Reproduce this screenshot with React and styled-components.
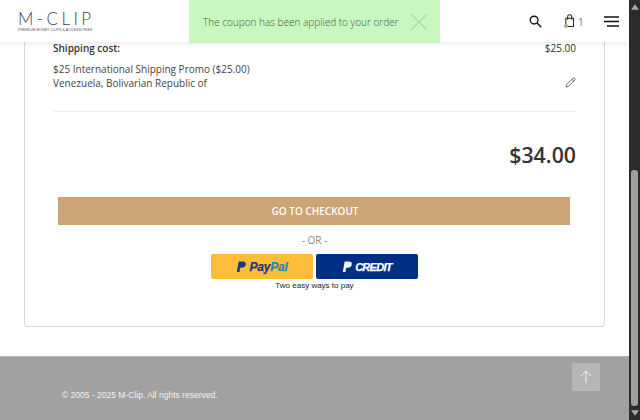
import styled, { createGlobalStyle } from 'styled-components';
import { Pencil } from 'lucide-react';

const GlobalStyle = createGlobalStyle`
    html, body {
        margin:0;
        padding:0;
        height:420px;
        overflow:hidden;
        background:#fff;
    }
    * {
        box-sizing:border-box;
    }
`

const Page = styled.div`
    display:flex;
    width:640px;
    height:420px;
    font-family:"Open Sans", sans-serif;
    color:#333;
`

const Main = styled.div`
    flex:1;
    display:flex;
    flex-direction:column;
    min-width:0;
`

const Header = styled.header`
    position:relative;
    z-index:2;
    flex:none;
    height:42px;
    display:flex;
    align-items:center;
    justify-content:space-between;
    padding:0 10px 0 18px;
    background:#fff;
    box-shadow:0 1px 6px rgba(0,0,0,.1);
`

const Logo = styled.div`
    display:flex;
    flex-direction:column;
    margin-top:1px;
`

const LogoName = styled.span`
    font-family:Lato, sans-serif;
    font-weight:300;
    font-size:17px;
    line-height:18px;
    letter-spacing:3.4px;
    color:#444;
`

const LogoTag = styled.span`
    font-family:"Liberation Sans", sans-serif;
    font-size:3.6px;
    line-height:5px;
    letter-spacing:.05px;
    color:#555;
    white-space:nowrap;
`

const Toast = styled.div`
    position:absolute;
    left:189px;
    top:0;
    width:251px;
    height:43px;
    display:flex;
    align-items:center;
    justify-content:space-between;
    padding:0 12px 0 14px;
    background:#c9f7c0;
    color:#465545;
    font-family:"Open Sans", sans-serif;
    font-weight:300;
    font-size:10px;
    white-space:nowrap;
`

const Tools = styled.div`
    display:flex;
    align-items:center;
`

const CartCount = styled.span`
    font-size:11px;
    color:#888;
    margin-left:3px;
    margin-right:20px;
`

const CartMark = styled.span`
    position:relative;
    display:flex;
`

const CartDot = styled.span`
    position:absolute;
    left:0;
    bottom:0;
    width:4px;
    height:4px;
    border-radius:50%;
    background:#c9a472;
`

const Content = styled.main`
    flex:1;
    display:flex;
    flex-direction:column;
    min-height:0;
`

const Card = styled.section`
    flex:none;
    margin:0 24px;
    height:285px;
    padding:0 28px;
    border:1px solid #d9d9d9;
    border-top:0;
    border-radius:0 0 4px 4px;
    display:flex;
    flex-direction:column;
    font-size:10px;
`

const CostRow = styled.div`
    display:flex;
    justify-content:space-between;
    align-items:center;
    height:17px;
    margin-top:-3px;
`

const CostLabel = styled.span`
    font-weight:600;
`

const ShippingInfo = styled.div`
    display:flex;
    justify-content:space-between;
    align-items:flex-end;
    margin-top:6px;
    padding-bottom:21px;
    border-bottom:1px solid #eee;
    line-height:14px;
    color:#444;
`

const EditIcon = styled.span`
    display:flex;
    margin-bottom:2px;
    color:#222;
`

const Total = styled.div`
    margin-top:28px;
    text-align:right;
    font-size:21.3px;
    line-height:30px;
    font-weight:600;
    color:#333;
`

const CheckoutButton = styled.button`
    display:block;
    flex:none;
    width:512px;
    height:28px;
    margin:27px 0 0 5px;
    padding:0 0 0 2px;
    border:0;
    background:#cda476;
    color:#fff;
    font-family:"Open Sans", sans-serif;
    font-size:10px;
    font-weight:600;
`

const OrLine = styled.div`
    margin-top:8px;
    text-align:center;
    font-size:10px;
    line-height:14px;
    color:#888;
`

const PayButtons = styled.div`
    display:flex;
    justify-content:center;
    gap:3px;
    margin-top:7px;
`

const PayButton = styled.div`
    width:102px;
    height:25px;
    border-radius:2px;
    display:flex;
    align-items:center;
    justify-content:center;
    gap:2px;
    background:${props => props.$bg};
    font-family:"Liberation Sans", sans-serif;
    font-style:italic;
    font-weight:700;
    font-size:${props => props.$size};
    letter-spacing:${props => props.$tight};
    -webkit-text-stroke:.25px currentColor;
`

const PayWord = styled.span`
    color:${props => props.$color};
`

const PayNote = styled.div`
    margin-top:1px;
    text-align:center;
    font-family:"Liberation Sans", sans-serif;
    font-size:8px;
    line-height:12px;
    color:#222;
`

const Footer = styled.footer`
    flex:1;
    margin-top:29px;
    display:flex;
    align-items:flex-start;
    justify-content:space-between;
    padding:6px 29px 0 62px;
    background:#a1a1a1;
    border-top:1px solid #b3b3b3;
`

const Copyright = styled.span`
    margin-top:26px;
    font-family:"Liberation Sans", sans-serif;
    font-size:8.5px;
    line-height:12px;
    color:#f2f2f2;
`

const TopButton = styled.div`
    width:28px;
    height:28px;
    display:flex;
    align-items:center;
    justify-content:center;
    background:#b6b6b6;
    border-radius:1px;
`

const Scrollbar = styled.div`
    flex:none;
    width:11px;
    display:flex;
    flex-direction:column;
    align-items:center;
    background:#2c2c2c;
`

const ScrollArrow = styled.div`
    flex:none;
    height:14px;
    display:flex;
    align-items:center;
    justify-content:center;
`

const ScrollTrack = styled.div`
    flex:1;
    width:100%;
    padding:156px 2px 0 2px;
    display:flex;
`

const ScrollThumb = styled.div`
    flex:1;
    border-radius:3px;
    background:#9f9f9f;
`

function PayMark({ color }) {
    return (
        <svg width="11" height="12" viewBox="0 0 11 12">
            <path d="M2.6 0.5h4.2c2.2 0 3.4 1.2 3 3.1-.4 2.1-2 3.2-4.1 3.2H4.2l-.7 4.3H.8z" fill={color} />
        </svg>
    )
}

export default function App() {
    return (
        <Page>
            <GlobalStyle />
            <Main>
                <Header>
                    <Logo>
                        <LogoName>M-CLIP</LogoName>
                        <LogoTag>PREMIUM MONEY CLIPS &amp; ACCESSORIES</LogoTag>
                    </Logo>
                    <Toast>
                        The coupon has been applied to your order
                        <svg width="18" height="18" viewBox="0 0 18 18" fill="none" stroke="#aed9a6" strokeWidth="1.2">
                            <path d="M1 1l16 16M17 1L1 17" />
                        </svg>
                    </Toast>
                    <Tools>
                        <svg width="13" height="13" viewBox="0 0 14 14" fill="none" stroke="#111" strokeWidth="1.5" style={{ marginRight: 22 }}>
                            <circle cx="5.5" cy="5.5" r="4.2" />
                            <path d="M8.6 8.6l4.6 4.6" />
                        </svg>
                        <CartMark>
                            <svg width="11" height="14" viewBox="0 0 12 15" fill="none" stroke="#222" strokeWidth="1.1">
                                <path d="M2 4.5h8.4v9H2z" />
                                <path d="M4 6V2.6C4 1.4 5 .7 6.2.7s2.2.7 2.2 1.9V6" />
                            </svg>
                            <CartDot />
                        </CartMark>
                        <CartCount>1</CartCount>
                        <svg width="15" height="11" viewBox="0 0 15 11" fill="none" stroke="#111" strokeWidth="1.3">
                            <path d="M0 1h15M0 5.5h15M3 10h12" />
                        </svg>
                    </Tools>
                </Header>
                <Content>
                    <Card>
                        <CostRow>
                            <CostLabel>Shipping cost:</CostLabel>
                            <span>$25.00</span>
                        </CostRow>
                        <ShippingInfo>
                            <div>
                                $25 International Shipping Promo ($25.00)
                                <br />
                                Venezuela, Bolivarian Republic of
                            </div>
                            <EditIcon><Pencil size={11} strokeWidth={1.4} /></EditIcon>
                        </ShippingInfo>
                        <Total>$34.00</Total>
                        <CheckoutButton>GO TO CHECKOUT</CheckoutButton>
                        <OrLine>- OR -</OrLine>
                        <PayButtons>
                            <PayButton $bg="#fdbd39" $size="12px" $tight="-.2px">
                                <PayMark color="#1a3a80" />
                                <span>
                                    <PayWord $color="#1a3a80">Pay</PayWord>
                                    <PayWord $color="#1d86c4">Pal</PayWord>
                                </span>
                            </PayButton>
                            <PayButton $bg="#012f86" $size="11px" $tight="-.7px">
                                <PayMark color="#f1f3f8" />
                                <PayWord $color="#fff">CREDIT</PayWord>
                            </PayButton>
                        </PayButtons>
                        <PayNote>Two easy ways to pay</PayNote>
                    </Card>
                    <Footer>
                        <Copyright>© 2005 - 2025 M-Clip. All rights reserved.</Copyright>
                        <TopButton>
                            <svg width="12" height="14" viewBox="0 0 12 14" fill="none" stroke="#f2f2f2" strokeWidth="1">
                                <path d="M6 13V1M1 6l5-5 5 5" />
                            </svg>
                        </TopButton>
                    </Footer>
                </Content>
            </Main>
            <Scrollbar>
                <ScrollArrow>
                    <svg width="8" height="6" viewBox="0 0 9 6"><path d="M4.5 0L9 6H0z" fill="#aaa" /></svg>
                </ScrollArrow>
                <ScrollTrack><ScrollThumb /></ScrollTrack>
                <ScrollArrow>
                    <svg width="8" height="6" viewBox="0 0 9 6"><path d="M4.5 6L0 0h9z" fill="#aaa" /></svg>
                </ScrollArrow>
            </Scrollbar>
        </Page>
    )
}
